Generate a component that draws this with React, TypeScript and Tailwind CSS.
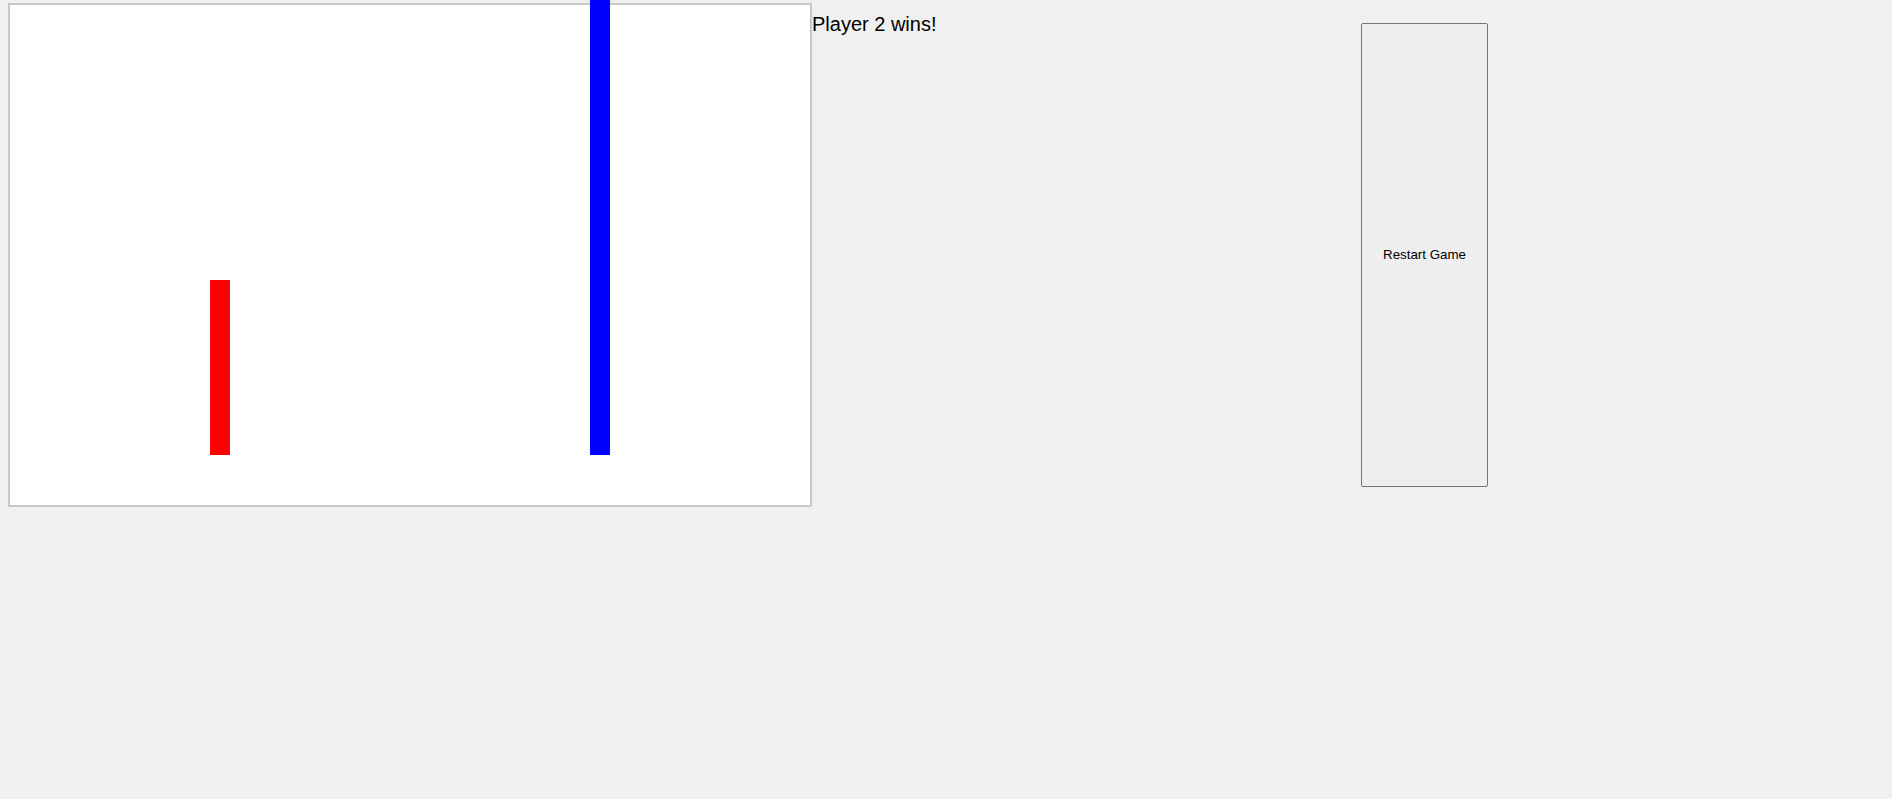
export default function App() {
  return (
    <div className="min-h-[799px] bg-[#f0f0f0] font-['Liberation_Sans',Arial,sans-serif] text-black">
      <div className="flex items-start">
        <div className="relative ml-[8px] mt-[3px] h-[504px] w-[804px] shrink-0 border-2 border-[#c8c8c8] bg-white">
          <div className="absolute left-[200px] top-[275px] h-[175px] w-[20px] bg-[#ff0000]" />
          <div className="absolute left-[580px] top-[-20px] h-[470px] w-[20px] bg-[#0000ff]" />
        </div>
        <div className="mt-[13px] w-[549px] shrink-0 text-[20px] leading-[23px]">Player 2 wins!</div>
        <button className="mt-[23px] h-[464px] w-[127px] shrink-0 rounded-[2px] border border-[#767676] bg-[#efefef] text-[13.33px] text-black">
          Restart Game
        </button>
      </div>
    </div>
  );
}
